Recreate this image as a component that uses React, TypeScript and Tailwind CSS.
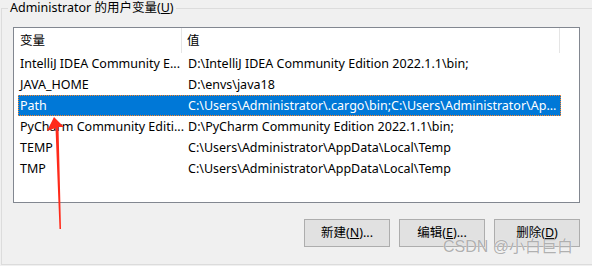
import React from 'react'

const rows = [
  { name: 'IntelliJ IDEA Community E...', value: 'D:\\IntelliJ IDEA Community Edition 2022.1.1\\bin;' },
  { name: 'JAVA_HOME', value: 'D:\\envs\\java18' },
  { name: 'Path', value: 'C:\\Users\\Administrator\\.cargo\\bin;C:\\Users\\Administrator\\Ap...', selected: true },
  { name: 'PyCharm Community Editi...', value: 'D:\\PyCharm Community Edition 2022.1.1\\bin;' },
  { name: 'TEMP', value: 'C:\\Users\\Administrator\\AppData\\Local\\Temp' },
  { name: 'TMP', value: 'C:\\Users\\Administrator\\AppData\\Local\\Temp' },
]

const font = { fontFamily: '"Noto Sans", "Noto Sans CJK SC", sans-serif' }

function Button({ label, mnemonic }: { label: string; mnemonic: string }) {
  return (
    <button className="flex h-[28px] w-[86px] items-center justify-center border border-[#adadad] bg-[#e1e1e1] text-[12.5px] leading-[16px] text-black">
      {label}(<span className="underline">{mnemonic}</span>)
      {label === '删除' ? '' : '...'}
    </button>
  )
}

export default function App() {
  return (
    <div
      className="relative h-[266px] w-[592px] overflow-hidden bg-[#f0f0f0] pl-[1px] pt-[8px] text-[12.5px] leading-[16px] text-black"
      style={font}
    >
      <div className="relative h-[257px] w-[600px] border border-[#dcdcdc]">
        <div className="absolute left-[6px] top-[-9px] whitespace-nowrap bg-[#f0f0f0] px-[2px] leading-[16px]">
          Administrator 的用户变量(<span className="underline">U</span>)
        </div>

        <div className="ml-[11px] mt-[18px] flex h-[176px] w-[567px] flex-col border border-[#828790] bg-white">
          <div className="flex h-[25px] shrink-0 items-center">
            <div className="flex h-full w-[168px] items-center border-r border-[#e5e5e5] pl-[6px]">变量</div>
            <div className="flex h-full w-[378px] items-center border-r border-[#e5e5e5] pl-[5px]">值</div>
          </div>
          <div className="flex flex-col pl-[4px]">
            {rows.map((r) => (
              <div
                key={r.name}
                className={
                  r.selected
                    ? 'flex h-[21px] w-[543px] items-center border border-dotted border-[#ff8728] bg-[#0078d7] text-white'
                    : 'flex h-[21px] w-[543px] items-center border border-transparent'
                }
              >
                <div className="w-[169px] shrink-0 whitespace-nowrap pl-[1px]">{r.name}</div>
                <div className="whitespace-nowrap">{r.value}</div>
              </div>
            ))}
          </div>
        </div>

        <div className="ml-[302px] mt-[16px] flex gap-[9px]">
          <Button label="新建" mnemonic="N" />
          <Button label="编辑" mnemonic="E" />
          <Button label="删除" mnemonic="D" />
        </div>
      </div>

      <svg className="absolute left-0 top-0" width="592" height="266">
        <polygon points="54,117 64,127 58.5,127 61,229 59.5,229 55.5,128 47,131" fill="#ff2a1a" />
      </svg>

      <div className="absolute left-[443px] top-[238px] whitespace-nowrap font-['Liberation_Sans','Noto_Sans_CJK_SC',sans-serif] text-[16px] leading-[18px] text-[#a6a6a6]/90 [text-shadow:0_0_1px_#ffffff]">
        CSDN @小白巨白
      </div>
    </div>
  )
}
